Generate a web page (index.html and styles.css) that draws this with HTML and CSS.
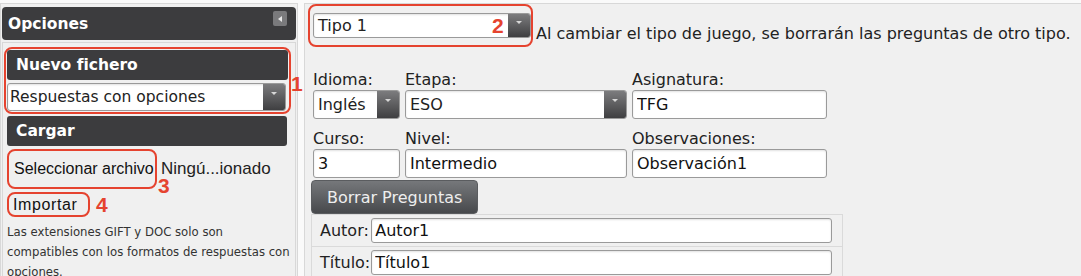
FILE: index.html
```html
<!DOCTYPE html>
<html lang="es">
<head>
    <meta charset="UTF-8">
    <meta name="viewport" content="width=device-width, initial-scale=1.0">
    <title>Opciones</title>
    <link rel="stylesheet" href="styles.css">
</head>
<body>
    <div class="page">
        <!-- Barra lateral -->
        <aside class="sidebar">
            <div class="panel-title">
                <span>Opciones</span>
                <span class="collapse-btn"></span>
            </div>

            <div class="sidebar-body">
                <div class="mark mark-new">
                    <div class="section-title">Nuevo fichero</div>
                    <div class="select select-format">
                        <span class="select-value">Respuestas con opciones</span>
                        <span class="select-arrow"></span>
                    </div>
                    <span class="mark-num num-1">1</span>
                </div>

                <div class="section-title section-load">Cargar</div>

                <div class="file-row">
                    <button class="mark file-btn">Seleccionar archivo<span class="mark-num num-3">3</span></button>
                    <span class="file-name">Ningú...ionado</span>
                </div>

                <div class="import-row">
                    <button class="mark import-btn">Importar</button>
                    <span class="mark-num-inline">4</span>
                </div>

                <p class="note">Las extensiones GIFT y DOC solo son compatibles con los formatos de respuestas con opciones.</p>
            </div>
        </aside>

        <!-- Contenido principal -->
        <main class="main">
            <div class="type-row">
                <div class="mark mark-type">
                    <div class="select select-type">
                        <span class="select-value">Tipo 1</span>
                        <span class="select-arrow"></span>
                    </div>
                    <span class="mark-num num-2">2</span>
                </div>
                <span class="type-note">Al cambiar el tipo de juego, se borrarán las preguntas de otro tipo.</span>
            </div>

            <div class="fields">
                <div class="field">
                    <label>Idioma:</label>
                    <div class="select">
                        <span class="select-value">Inglés</span>
                        <span class="select-arrow"></span>
                    </div>
                </div>
                <div class="field">
                    <label>Etapa:</label>
                    <div class="select">
                        <span class="select-value">ESO</span>
                        <span class="select-arrow"></span>
                    </div>
                </div>
                <div class="field">
                    <label>Asignatura:</label>
                    <input class="text-input" type="text" value="TFG">
                </div>
                <div class="field">
                    <label>Curso:</label>
                    <input class="text-input" type="text" value="3">
                </div>
                <div class="field">
                    <label>Nivel:</label>
                    <input class="text-input" type="text" value="Intermedio">
                </div>
                <div class="field">
                    <label>Observaciones:</label>
                    <input class="text-input" type="text" value="Observación1">
                </div>
            </div>

            <button class="btn-dark">Borrar Preguntas</button>

            <table class="meta">
                <tr>
                    <td class="meta-label">Autor:</td>
                    <td class="meta-value"><input class="text-input" type="text" value="Autor1"></td>
                </tr>
                <tr>
                    <td class="meta-label">Título:</td>
                    <td class="meta-value"><input class="text-input" type="text" value="Título1"></td>
                </tr>
            </table>
        </main>
    </div>
</body>
</html>
```

FILE: styles.css
```css
body {
    margin: 0;
    padding: 0;
    background-color: #fafafa;
    font-family: "DejaVu Sans", Verdana, sans-serif;
    font-size: 16px;
    color: #222;
    overflow: hidden;
}

.page {
    display: flex;
    gap: 6px;
    padding-top: 3px;
    height: 273px;
}

/* Barra lateral */
.sidebar {
    width: 298px;
    flex-shrink: 0;
    box-sizing: border-box;
    background-color: #f0f0f0;
    border: 1px solid #d8d8d8;
    border-bottom: none;
    padding: 3px 1px 0 1px;
    font-size: 15.5px;
}

.panel-title {
    display: flex;
    justify-content: space-between;
    align-items: center;
    height: 33px;
    padding: 0 9px 0 6px;
    background-color: #3c3c3e;
    border-radius: 4px;
    color: #fff;
    font-weight: bold;
    font-size: 15.5px;
}

.collapse-btn {
    align-self: flex-start;
    margin-top: 4px;
    width: 14px;
    height: 15px;
    background-color: #7a7a7c;
    border-radius: 2px;
    display: flex;
    align-items: center;
    justify-content: center;
}

.collapse-btn::after {
    content: "";
    border-top: 3px solid transparent;
    border-bottom: 3px solid transparent;
    border-right: 4px solid #e8e8e8;
}

.sidebar-body {
    margin-top: 2px;
    border: 1px solid #d8d8d8;
    border-bottom: none;
    padding: 4px 1px 0 1px;
    height: 240px;
}

/* Marcas rojas */
.mark {
    position: relative;
    border: 2px solid #e5432f;
    border-radius: 8px;
    box-sizing: border-box;
}

.mark-num,
.mark-num-inline {
    font-family: "Liberation Sans", Arial, sans-serif;
    font-weight: bold;
    font-size: 21px;
    line-height: 21px;
    color: #e5432f;
}

.mark-num {
    position: absolute;
}

.mark-new {
    margin-right: 3px;
    padding: 1px;
}

.num-1 {
    top: 24px;
    left: calc(100% + 2px);
}

.section-title {
    height: 30px;
    display: flex;
    align-items: center;
    padding-left: 9px;
    background-color: #3c3c3e;
    border-radius: 3px;
    color: #fff;
    font-weight: bold;
}

.section-load {
    margin: 2px 7px 0 3px;
}

/* Select */
.select {
    display: flex;
    box-sizing: border-box;
    height: 29px;
    background-color: #fff;
    border: 1px solid #9a9a9a;
    border-radius: 3px;
    box-shadow: inset 0 1px 2px rgba(0, 0, 0, 0.12);
}

.select-value {
    flex: 1;
    display: flex;
    align-items: center;
    padding-left: 4px;
    white-space: nowrap;
}

.select-arrow {
    width: 22px;
    display: flex;
    justify-content: center;
    padding-top: 8px;
    box-sizing: border-box;
    background: linear-gradient(#7c7c7e, #3f3f41);
    border-radius: 0 2px 2px 0;
}

.select-arrow::after {
    content: "";
    width: 0;
    height: 0;
    border-left: 3px solid transparent;
    border-right: 3px solid transparent;
    border-top: 3px solid #d8d8d8;
}

.select-format {
    margin-top: 3px;
    height: 28px;
    margin-right: 2px;
}

.select-format .select-value {
    padding-left: 2px;
}

/* Ficheros */
.file-row {
    display: flex;
    align-items: center;
    gap: 4px;
    margin: 3px 0 0 3px;
}

.file-btn,
.import-btn {
    background-color: #efefef;
    font-family: "Liberation Sans", Arial, sans-serif;
    font-size: 16px;
    color: #111;
    text-align: left;
    padding: 0 0 0 5px;
    margin: 0;
}

.file-btn {
    width: 150px;
    height: 40px;
}

.num-3 {
    top: 24px;
    left: calc(100% + 3px);
}

.file-name {
    font-family: "Liberation Sans", Arial, sans-serif;
    font-size: 17px;
}

.import-row {
    display: flex;
    align-items: center;
    gap: 6px;
    margin: 3px 0 0 3px;
}

.import-btn {
    width: 83px;
    height: 25px;
    padding-left: 4px;
    letter-spacing: 0.6px;
}

.note {
    margin: 5px 0 0 3px;
    font-size: 11.7px;
    line-height: 20px;
    color: #333;
}

/* Contenido principal */
.main {
    flex: 1;
    background-color: #f0f0f0;
    border: 1px solid #d8d8d8;
    border-right: none;
    border-bottom: none;
    padding: 0 0 0 3px;
}

.type-row {
    display: flex;
    align-items: flex-end;
    gap: 3px;
    margin-top: 0;
}

.mark-type {
    padding: 7px 0 7px 3px;
}

.select-type {
    width: 218px;
    height: 25px;
}

.select-type .select-arrow {
    padding-top: 7px;
}

.num-2 {
    top: 9px;
    left: 182px;
}

.type-note {
    line-height: 19px;
    padding-bottom: 4px;
    white-space: nowrap;
}

.fields {
    display: grid;
    grid-template-columns: 87px 222px 195px;
    column-gap: 5px;
    row-gap: 10px;
    margin: 23px 0 0 5px;
}

.field {
    display: flex;
    flex-direction: column;
    gap: 1px;
}

.field label {
    line-height: 19px;
}

.text-input {
    box-sizing: border-box;
    width: 100%;
    height: 29px;
    margin: 0;
    padding: 0 4px;
    background-color: #fff;
    border: 1px solid #9a9a9a;
    border-radius: 3px;
    box-shadow: inset 0 1px 2px rgba(0, 0, 0, 0.12);
    font-family: "DejaVu Sans", Verdana, sans-serif;
    font-size: 16px;
    color: #111;
}

.btn-dark {
    display: block;
    margin: 2px 0 0 3px;
    width: 167px;
    height: 34px;
    padding: 0 0 0 15px;
    text-align: left;
    background: linear-gradient(#76787b, #47494c);
    border: 1px solid #5a5c5f;
    border-radius: 4px;
    color: #eeeeee;
    font-family: "DejaVu Sans", Verdana, sans-serif;
    font-size: 16px;
}

.meta {
    margin-left: 3px;
    width: 532px;
    border-collapse: collapse;
    border: 1px solid #dadada;
}

.meta tr + tr {
    border-top: 1px solid #dadada;
}

.meta td {
    padding: 0;
}

.meta-label {
    width: 1px;
    padding-left: 8px !important;
    white-space: nowrap;
}

.meta-value {
    padding: 3px 10px 3px 1px !important;
}

.meta .text-input {
    height: 25px;
    padding-left: 3px;
}
```
